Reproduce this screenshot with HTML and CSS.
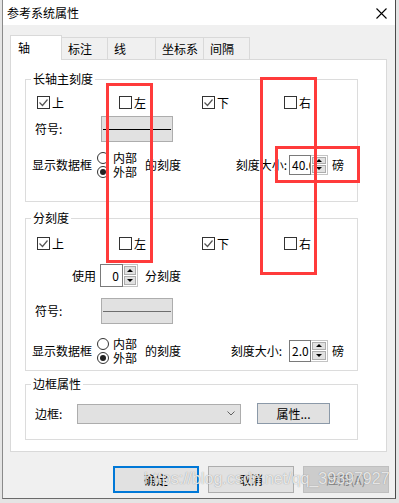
FILE: index.html
```html
<!DOCTYPE html>
<html lang="zh-CN">
<head>
  <meta charset="UTF-8" />
  <title>参考系统属性</title>
  <link rel="stylesheet" href="styles.css">
</head>
<body>
  <div class="screen">
    <div class="window">
      <div class="titlebar">
        <span>参考系统属性</span>
        <svg class="close" width="11" height="11" viewBox="0 0 11 11"><path d="M0.5 0.5L10.5 10.5M10.5 0.5L0.5 10.5" stroke="#000" stroke-width="1.1" fill="none"/></svg>
      </div>

      <div class="dlg">
        <div class="tabs">
          <div class="tab active">轴</div>
          <div class="tab t-47">标注</div>
          <div class="tab t-49">线</div>
          <div class="tab t-49">坐标系</div>
          <div class="tab t-47">间隔</div>
        </div>

        <div class="panel">
          <!-- major ticks -->
          <div class="group g1">
            <div class="group-title">长轴主刻度</div>
            <div class="checks">
              <label class="chk on"><span class="box"><svg width="11" height="11" viewBox="0 0 11 11"><path d="M1.5 5.5L4.5 8.5L9.5 2.5" stroke="#555" stroke-width="1.2" fill="none"/></svg></span>上</label>
              <label class="chk"><span class="box"></span>左</label>
              <label class="chk on"><span class="box"><svg width="11" height="11" viewBox="0 0 11 11"><path d="M1.5 5.5L4.5 8.5L9.5 2.5" stroke="#555" stroke-width="1.2" fill="none"/></svg></span>下</label>
              <label class="chk"><span class="box"></span>右</label>
            </div>
            <div class="row sym">
              <span class="lbl">符号:</span>
              <span class="swatch"><b></b></span>
            </div>
            <div class="row show">
              <span>显示数据框</span>
              <div class="radios">
                <label class="rad"><i></i>内部</label>
                <label class="rad on"><i></i>外部</label>
              </div>
              <span class="after">的刻度</span>
              <div class="size">
                <span>刻度大小:</span>
                <div class="spin s-20"><span class="val">40.0</span><span class="arrows"><b class="up"></b><b class="dn"></b></span></div>
                <span class="unit">磅</span>
              </div>
            </div>
          </div>

          <!-- minor ticks -->
          <div class="group g2">
            <div class="group-title">分刻度</div>
            <div class="checks">
              <label class="chk on"><span class="box"><svg width="11" height="11" viewBox="0 0 11 11"><path d="M1.5 5.5L4.5 8.5L9.5 2.5" stroke="#555" stroke-width="1.2" fill="none"/></svg></span>上</label>
              <label class="chk"><span class="box"></span>左</label>
              <label class="chk on"><span class="box"><svg width="11" height="11" viewBox="0 0 11 11"><path d="M1.5 5.5L4.5 8.5L9.5 2.5" stroke="#555" stroke-width="1.2" fill="none"/></svg></span>下</label>
              <label class="chk"><span class="box"></span>右</label>
            </div>
            <div class="row use">
              <span>使用</span>
              <div class="spin s-23"><span class="val num">0</span><span class="arrows"><b class="up"></b><b class="dn"></b></span></div>
              <span class="after2">分刻度</span>
            </div>
            <div class="row sym sym-2">
              <span class="lbl">符号:</span>
              <span class="swatch gray"><b></b></span>
            </div>
            <div class="row show show-2">
              <span>显示数据框</span>
              <div class="radios">
                <label class="rad"><i></i>内部</label>
                <label class="rad on"><i></i>外部</label>
              </div>
              <span class="after">的刻度</span>
              <div class="size">
                <span>刻度大小:</span>
                <div class="spin s-22 wide-gap"><span class="val">2.0</span><span class="arrows"><b class="up"></b><b class="dn"></b></span></div>
                <span class="unit">磅</span>
              </div>
            </div>
          </div>

          <!-- frame -->
          <div class="group g3">
            <div class="group-title">边框属性</div>
            <div class="row frame">
              <span class="lbl2">边框:</span>
              <div class="combo"><svg width="8" height="5" viewBox="0 0 8 5"><path d="M0.5 0.5L4 4L7.5 0.5" stroke="#606060" fill="none"/></svg></div>
              <div class="btn-prop">属性...</div>
            </div>
          </div>
        </div>

        <div class="actions">
          <div class="btn default">确定</div>
          <div class="btn">取消</div>
          <div class="btn disabled">应用(A)</div>
        </div>
      </div>
    </div>

    <div class="mark m1"></div>
    <div class="mark m2"></div>
    <div class="mark m3"></div>

    <div class="watermark">https://blog.csdn.net/qq_39397927</div>
  </div>
</body>
</html>
```

FILE: styles.css
```css
* { box-sizing: border-box; }
body { margin: 0; background: #e4e4e4; font: 12px/16px "Noto Sans CJK SC", "Microsoft YaHei", sans-serif; color: #000; }

.screen { position: relative; width: 399px; height: 503px; padding-left: 2px; overflow: hidden; }
.window { width: 394px; height: 499px; border: 1px solid #8a8a8a; border-top: 0; border-right-color: #4a4a4a; border-bottom-color: #6a6a6a; background: #f0f0f0; display: flex; flex-direction: column; }

.titlebar { height: 25px; flex: none; background: #fff; display: flex; align-items: center; justify-content: space-between; padding: 1px 8px 0 4px; }

.dlg { flex: 1; padding: 10px 0 0 7px; }

.tabs { display: flex; align-items: flex-end; height: 24px; position: relative; z-index: 1; }
.tab { height: 22px; margin-left: -1px; padding-left: 6px; border: 1px solid #d9d9d9; border-bottom: 0; background: #f0f0f0; line-height: 21px; }
.tab.active { width: 52px; height: 25px; margin: 0 0 -1px; padding-left: 7px; background: #fff; line-height: 24px; }
.t-47 { width: 47px; }
.t-49 { width: 49px; }

.panel { width: 377px; height: 393px; background: #fff; border: 1px solid #d9d9d9; }

.group { position: relative; width: 333px; margin-left: 14px; border: 1px solid #dcdcdc; }
.g1 { margin-top: 19px; height: 123px; padding-top: 14px; }
.g2 { margin-top: 16px; height: 153px; padding-top: 16px; }
.g3 { margin-top: 13px; height: 56px; padding-top: 18px; }
.group-title { position: absolute; top: -9px; left: 5px; padding: 0 2px; background: #fff; }

.checks { display: grid; grid-template-columns: 82px 83px 82px auto; height: 17px; padding-left: 11px; }
.chk { display: flex; align-items: center; gap: 2px; }
.box { width: 13px; height: 13px; border: 1px solid #333; background: #fff; display: flex; }

.row { display: flex; align-items: center; }
.sym { margin-top: 5px; height: 26px; padding-left: 9px; }
.sym-2 { margin-top: 11px; }
.lbl { width: 66px; }
.swatch { width: 72px; height: 26px; padding: 0 1px; display: flex; align-items: center; background: #e1e1e1; border: 1px solid #adadad; }
.swatch b { flex: 1; height: 1px; background: #000; }
.swatch.gray b { background: #6e6e6e; }

.show { margin-top: 8px; height: 29px; padding: 0 13px 0 6px; }
.show-2 { margin-top: 12px; }
.radios { margin-left: 5px; display: flex; flex-direction: column; }
.rad { display: flex; align-items: center; gap: 4px; height: 14px; line-height: 14px; }
.rad i { width: 12px; height: 12px; border: 1px solid #333; border-radius: 50%; background: #fff; display: flex; align-items: center; justify-content: center; }
.rad.on i::after { content: ""; width: 6px; height: 6px; border-radius: 50%; background: #222; }
.after { margin-left: 8px; }
.size { margin-left: auto; display: flex; align-items: center; }
.unit { margin-left: 4px; }

.spin { display: flex; margin-left: 2px; }
.spin.wide-gap { margin-left: 7px; }
.s-20 { height: 20px; }
.s-22 { height: 22px; }
.s-23 { height: 23px; margin-left: 4px; }
.val { width: 22px; padding-left: 2px; border: 1px solid #7a7a7a; background: #fff; overflow: hidden; white-space: nowrap; display: flex; align-items: center; }
.val.num { width: 23px; justify-content: flex-end; padding: 0 3px 0 0; }
.arrows { width: 17px; padding: 1px; gap: 1px; display: flex; flex-direction: column; border: 1px solid #c4c4c4; border-left: 0; background: #fff; }
.s-23 .arrows { width: 15px; }
.arrows b { flex: 1; background: #e1e1e1; border: 1px solid #adadad; display: flex; align-items: center; justify-content: center; }
.arrows .up::after { content: ""; border: 3px solid transparent; border-top: 0; border-bottom: 3px solid #000; }
.arrows .dn::after { content: ""; border: 3px solid transparent; border-bottom: 0; border-top: 3px solid #000; }

.use { margin-top: 12px; height: 23px; padding-left: 46px; }
.after2 { margin-left: 7px; }

.frame { height: 21px; padding-left: 9px; }
.lbl2 { width: 42px; }
.combo { width: 164px; height: 20px; padding-right: 5px; display: flex; align-items: center; justify-content: flex-end; background: #e1e1e1; border: 1px solid #adadad; }
.btn-prop { width: 73px; height: 21px; margin-left: 16px; background: #e1e1e1; border: 1px solid #8b99a8; text-align: center; line-height: 19px; }

.actions { display: flex; justify-content: flex-end; gap: 9px; margin-top: 14px; padding-right: 6px; }
.btn { width: 86px; height: 27px; background: #e1e1e1; border: 1px solid #adadad; text-align: center; line-height: 25px; }
.btn.default { border: 2px solid #0078d7; line-height: 23px; }
.btn.disabled { background: #cccccc; border-color: #bfbfbf; color: #838383; }

.mark { position: absolute; border: 3px solid #ff3b3b; }
.m1 { left: 106px; top: 83px; width: 47px; height: 180px; }
.m2 { left: 260px; top: 77px; width: 57px; height: 198px; }
.m3 { left: 275px; top: 146px; width: 85px; height: 37px; }

.watermark { position: absolute; left: 144px; top: 470px; font: 16px/18px "Liberation Sans", Arial, sans-serif; color: rgba(255, 255, 255, 0.8); text-shadow: 0 0 1px rgba(70, 70, 70, 0.6); white-space: nowrap; }
```
